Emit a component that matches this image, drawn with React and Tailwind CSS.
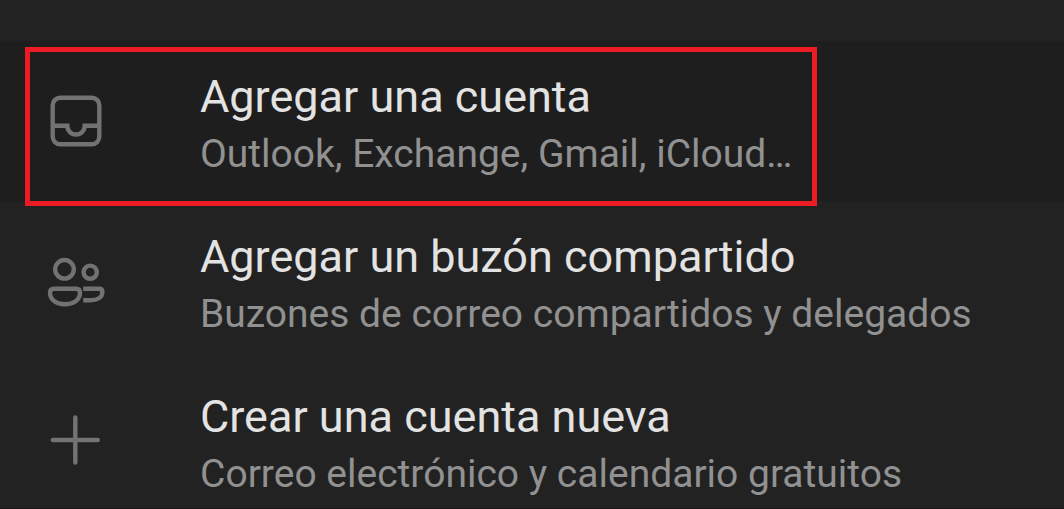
import React from "react";

function InboxIcon() {
  return (
    <svg viewBox="0 0 60 60" fill="none" stroke="currentColor" strokeWidth="4.4" className="h-15 w-15" aria-hidden="true">
      <rect x="6.7" y="6.7" width="46.6" height="46.6" rx="7.5" />
      <path d="M6.7 34.8H21.3A8.7 8.7 0 0 0 38.7 34.8H53.3" />
    </svg>
  );
}

function PeopleIcon() {
  return (
    <svg viewBox="0 0 60 60" fill="none" stroke="currentColor" strokeWidth="4.4" className="h-15 w-15" aria-hidden="true">
      <circle cx="18.5" cy="18.3" r="9.3" />
      <circle cx="44.2" cy="21.2" r="6.6" />
      <path d="M8 37.8H30Q34 37.8 34 41.8C34 49 27.5 53.2 19 53.2S4 49 4 41.8Q4 37.8 8 37.8Z" />
      <path d="M37.2 37.8H53Q56.4 37.8 56.4 41C56.4 46.5 51 49.2 44.5 49.2H37.2" />
    </svg>
  );
}

function PlusIcon() {
  return (
    <svg viewBox="0 0 60 60" fill="none" stroke="currentColor" strokeWidth="4.4" strokeLinecap="round" className="h-15 w-15" aria-hidden="true">
      <path d="M29.3 6.5V51.5M6.8 29H51.8" />
    </svg>
  );
}

const options = [
  {
    title: "Agregar una cuenta",
    subtitle: "Outlook, Exchange, Gmail, iCloud…",
    Icon: InboxIcon,
    active: true,
  },
  {
    title: "Agregar un buzón compartido",
    subtitle: "Buzones de correo compartidos y delegados",
    Icon: PeopleIcon,
  },
  {
    title: "Crear una cuenta nueva",
    subtitle: "Correo electrónico y calendario gratuitos",
    Icon: PlusIcon,
  },
];

export default function App() {
  return (
    <div className="h-screen overflow-hidden border-b border-[#1c161b] bg-[#222222] pt-[41px] font-['Roboto',sans-serif]">
      <ul>
        {options.map(({ title, subtitle, Icon, active }) => (
          <li key={title} className="relative">
            <button
              type="button"
              className={`flex h-40 w-full items-center gap-[94px] pl-[46px] text-left ${
                active ? "bg-[#1e1e1e]" : "bg-[#222222]"
              }`}
            >
              <span className="shrink-0 text-[#727272]">
                <Icon />
              </span>
              <span className="flex flex-col whitespace-nowrap pt-1.5">
                <span className="text-[45px] leading-[60px] text-[#e3e3e3]">
                  {title}
                </span>
                <span className="text-[39px] leading-[54px] text-[#919191]">
                  {subtitle}
                </span>
              </span>
            </button>
            {/* Highlight frame */}
            {active && (
              <div className="pointer-events-none absolute -bottom-[5px] left-[25px] top-[6px] z-10 w-[792px] border-5 border-[#ed1c24]" />
            )}
          </li>
        ))}
      </ul>
    </div>
  );
}
